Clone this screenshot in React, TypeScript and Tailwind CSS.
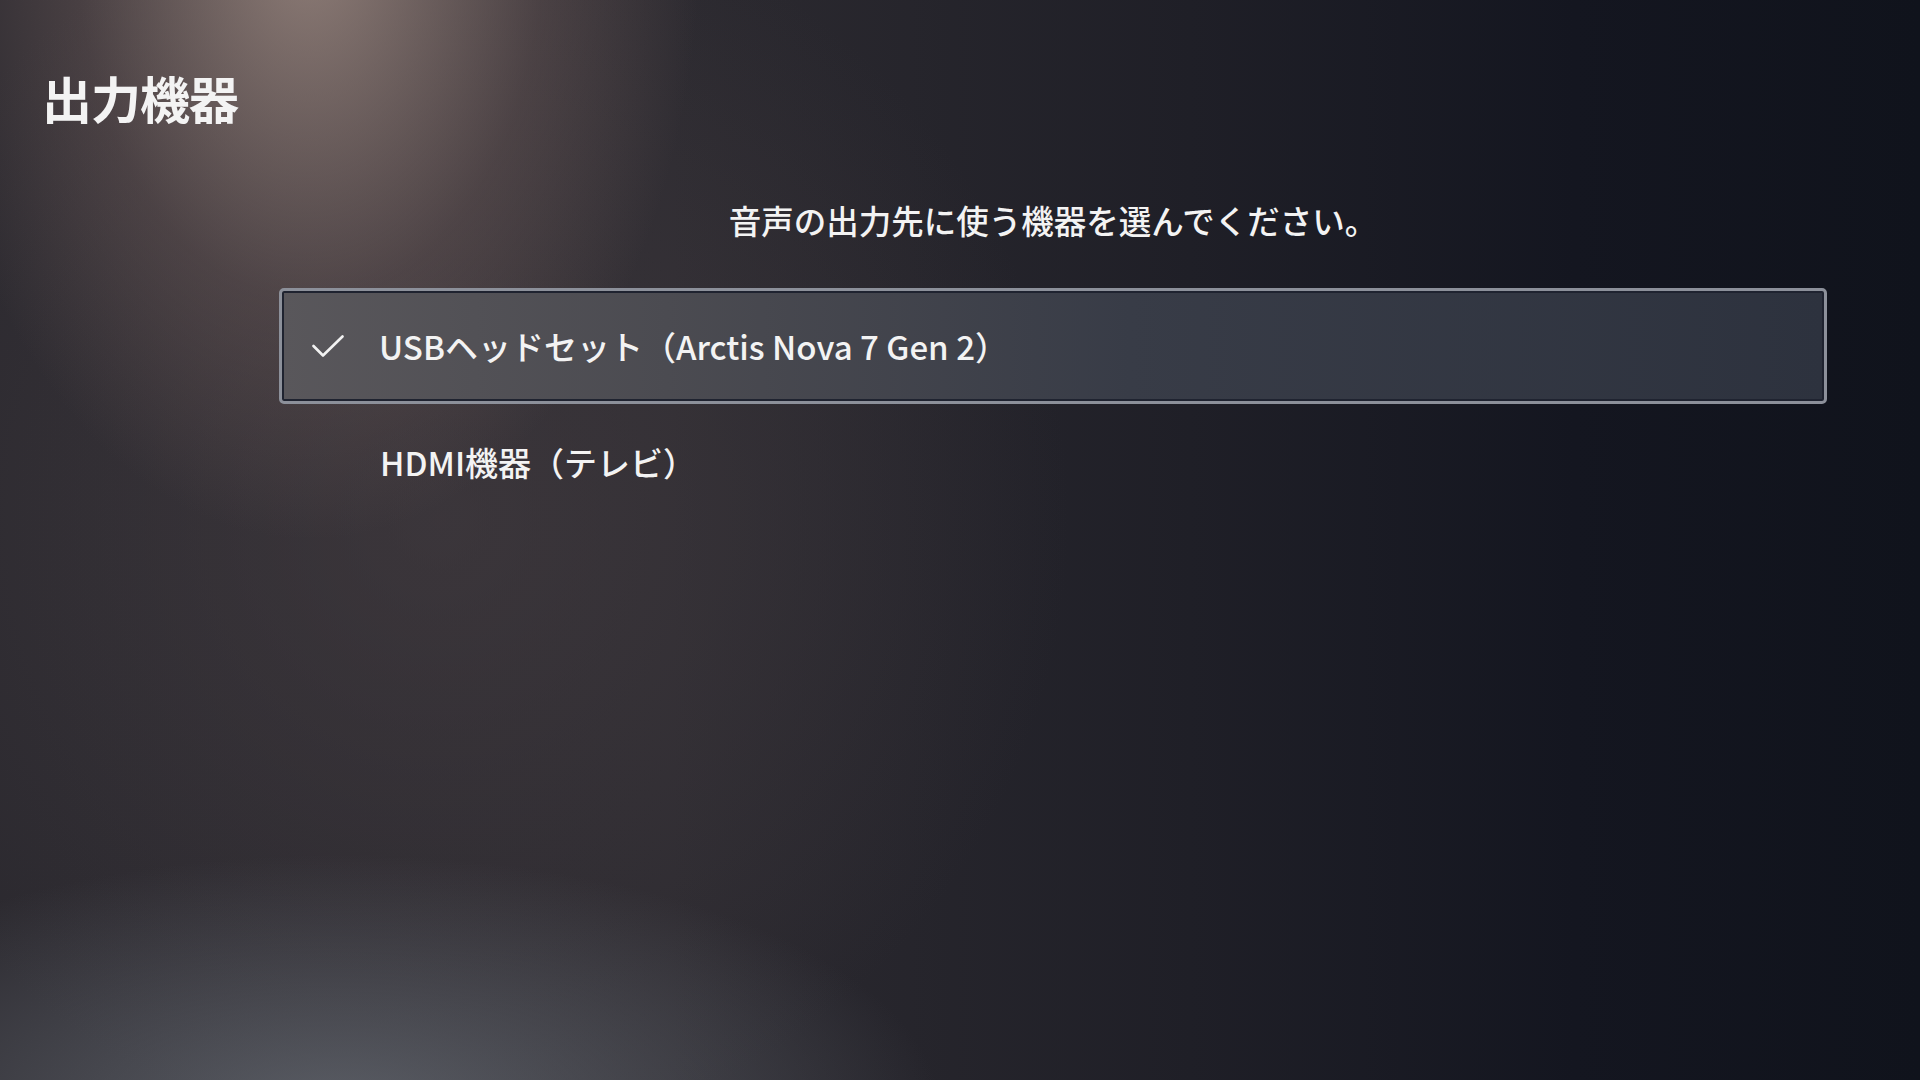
import React from 'react';

const devices = [
  { id: 'usb', label: 'USBヘッドセット（Arctis Nova 7 Gen 2）', selected: true },
  { id: 'hdmi', label: 'HDMI機器（テレビ）', selected: false },
];

function CheckMark() {
  return (
    <svg width="32" height="22" viewBox="0 0 32 22" fill="none" className="shrink-0">
      <polyline
        points="1.5,11 11,20.5 30.5,1.5"
        stroke="#f2f2f2"
        strokeWidth="2.6"
        strokeLinecap="round"
        strokeLinejoin="round"
      />
    </svg>
  );
}

export default function App() {
  return (
    <div
      className="relative h-[1080px] w-full overflow-hidden text-[#f3f3f3] bg-[radial-gradient(ellipse_520px_800px_at_310px_-60px,rgba(160,140,132,0.85),rgba(120,100,98,0.38)_45%,transparent_75%),radial-gradient(ellipse_800px_340px_at_340px_1110px,rgba(98,102,110,0.85),transparent_75%),radial-gradient(ellipse_900px_900px_at_440px_520px,rgba(72,64,68,0.55),transparent_70%),linear-gradient(90deg,#2b292f_0%,#2c2a30_35%,#1f1f27_62%,#141620_82%,#10131c_100%)]"
      style={{ fontFamily: '"Noto Sans CJK JP", "Noto Sans", sans-serif' }}
    >
      <h1 className="pl-[42px] pt-[67px] text-[50px] leading-[60px] font-bold tracking-[-1px]">出力機器</h1>

      <div className="ml-[279px] w-[1548px]">
        <p className="mt-[73px] text-center text-[32.5px] leading-[40px] font-medium">
          音声の出力先に使う機器を選んでください。
        </p>

        <ul className="mt-[48px] flex flex-col">
          {devices.map((d) =>
            d.selected ? (
              <li
                key={d.id}
                className="flex h-[116px] items-center gap-[35px] rounded-[5px] border-[3px] border-[#8c909a] bg-[linear-gradient(90deg,#59575b_0%,#4b4b51_25%,#383c47_55%,#2d323e_100%)] pl-[30px] shadow-[inset_0_0_0_2px_#1f2330]"
              >
                <CheckMark />
                <span className="text-[33px] leading-[40px] font-medium">{d.label}</span>
              </li>
            ) : (
              <li key={d.id} className="flex h-[115px] items-center border-[3px] border-transparent pl-[98px]">
                <span className="text-[33px] leading-[40px] font-medium">{d.label}</span>
              </li>
            )
          )}
        </ul>
      </div>
    </div>
  );
}
